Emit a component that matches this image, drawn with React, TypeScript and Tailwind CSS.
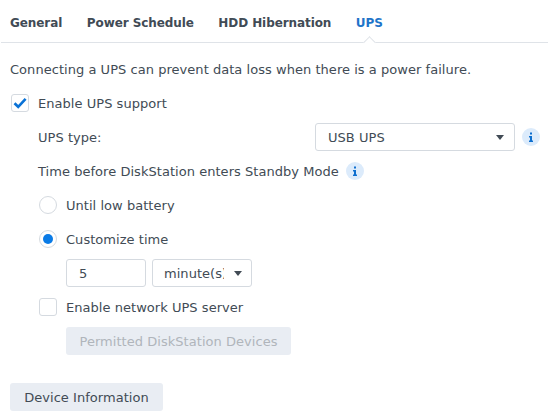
const font = "font-['DejaVu_Sans',sans-serif]";

function Info() {
  return (
    <span className="w-[18px] h-[18px] rounded-full bg-[#dcebfb] flex items-center justify-center shrink-0">
      <svg width="6" height="10" viewBox="0 0 6 10">
        <path d="M2 0.5h2v2H2zM1 4h3v4.5h1V10H1V8.5h1V5.5H1z" fill="#0d6fcf" />
      </svg>
    </span>
  );
}

function Check({ checked }: { checked?: boolean }) {
  return (
    <span className="w-[18px] h-[18px] rounded-[3px] border border-[#d5dae0] bg-white flex items-center justify-center shrink-0">
      {checked && (
        <svg width="14" height="12" viewBox="0 0 14 12">
          <path d="M1.5 6.2 5.2 9.8 12.6 1.8" fill="none" stroke="#0a72d6" strokeWidth="2.6" />
        </svg>
      )}
    </span>
  );
}

function Radio({ checked }: { checked?: boolean }) {
  return (
    <span className="w-[18px] h-[18px] rounded-full border border-[#d5dae0] bg-white flex items-center justify-center shrink-0">
      {checked && <span className="w-[10px] h-[10px] rounded-full bg-[#0a7be6]" />}
    </span>
  );
}

function Caret() {
  return <span className="w-0 h-0 border-x-[4.5px] border-x-transparent border-t-[5px] border-t-[#414b55] shrink-0" />;
}

function Row({ indent, children }: { indent: string; children: React.ReactNode }) {
  return <div className={`h-7 flex items-center ${indent}`}>{children}</div>;
}

function T({ children, className = "" }: { children: React.ReactNode; className?: string }) {
  return <span className={`pt-[2px] ${className}`}>{children}</span>;
}

export default function App() {
  return (
    <div className={`w-[549px] h-[419px] bg-white overflow-hidden text-[13px] tracking-[0.04px] text-[#414b55] ${font}`}>
      <div className="relative h-[43px] border-b border-[#dfe3e8] mx-[1px] flex items-center gap-[24.5px] pl-[9px] font-bold text-[12px] tracking-[-0.08px] pt-[3px]">
        <span>General</span>
        <span>Power Schedule</span>
        <span>HDD Hibernation</span>
        <span className="text-[#1f74c9]">UPS</span>
        <span className="absolute left-[364px] top-[38px] w-[9px] h-[9px] rotate-45 bg-white border-l border-t border-[#dfe3e8]" />
      </div>
      <div className="px-[10px] pt-[12px] flex flex-col gap-[6px]">
        <div className="h-7 flex items-center"><T>Connecting a UPS can prevent data loss when there is a power failure.</T></div>
        <Row indent="pl-[1px] gap-[9px]"><Check checked /><T>Enable UPS support</T></Row>
        <Row indent="pl-[28px]">
          <T className="w-[277px] shrink-0">UPS type:</T>
          <span className="w-[200px] h-7 shrink-0 rounded-[3px] border border-[#d5dae0] flex items-center justify-between pl-[12px] pr-[10px]">
            <T>USB UPS</T>
            <Caret />
          </span>
          <span className="ml-[7px]"><Info /></span>
        </Row>
        <Row indent="pl-[28px] gap-[7px]"><T>Time before DiskStation enters Standby Mode</T><Info /></Row>
        <Row indent="pl-[29px] gap-[9px]"><Radio /><T>Until low battery</T></Row>
        <Row indent="pl-[29px] gap-[9px]"><Radio checked /><T>Customize time</T></Row>
        <Row indent="pl-[56px] gap-[6px]">
          <span className="w-[80px] h-7 rounded-[3px] border border-[#d5dae0] flex items-center pl-[12px]"><T>5</T></span>
          <span className="w-[100px] h-7 rounded-[3px] border border-[#d5dae0] flex items-center pl-[11px] pr-[9px] justify-between">
            <T className="w-[60px] overflow-hidden whitespace-nowrap">minute(s)</T>
            <Caret />
          </span>
        </Row>
        <Row indent="pl-[29px] gap-[9px]"><Check /><T>Enable network UPS server</T></Row>
        <Row indent="pl-[56px]">
          <span className="w-[225px] h-7 rounded-[3px] bg-[#e9edf3] text-[#b0b5bb] flex items-center justify-center"><T>Permitted DiskStation Devices</T></span>
        </Row>
        <div className="mt-[22px] h-7 w-[153px] rounded-[3px] bg-[#e9edf3] flex items-center justify-center"><T>Device Information</T></div>
      </div>
    </div>
  );
}
